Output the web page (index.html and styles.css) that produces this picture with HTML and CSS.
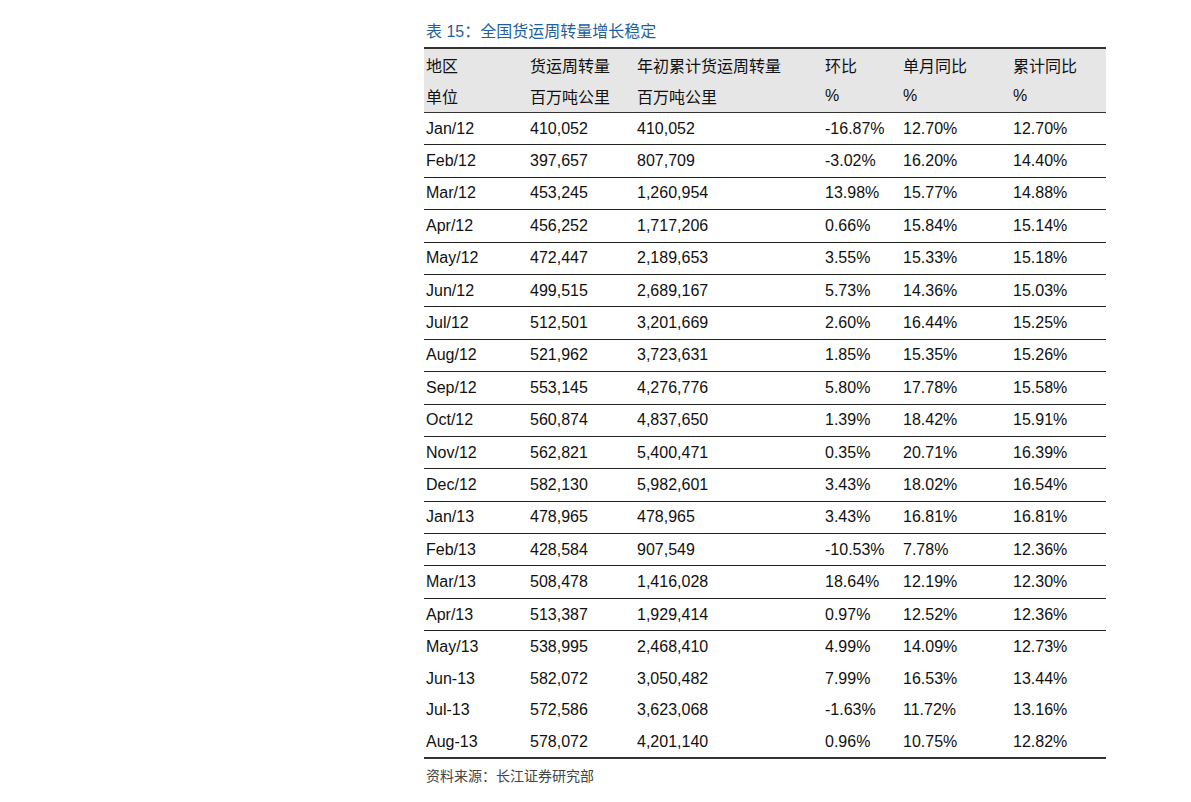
FILE: index.html
```html
<!DOCTYPE html>
<html lang="zh">
<head>
<meta charset="utf-8">
<link rel="stylesheet" href="styles.css">
</head>
<body>
<div class="page">
  <div class="title">表 15：全国货运周转量增长稳定</div>
  <table class="data">
    <colgroup>
      <col class="c1"><col class="c2"><col class="c3"><col class="c4"><col class="c5"><col class="c6">
    </colgroup>
    <thead>
      <tr><th>地区</th><th>货运周转量</th><th>年初累计货运周转量</th><th>环比</th><th>单月同比</th><th>累计同比</th></tr>
      <tr class="h2"><th>单位</th><th>百万吨公里</th><th>百万吨公里</th><th>%</th><th>%</th><th>%</th></tr>
    </thead>
    <tbody>
      <tr><td>Jan/12</td><td>410,052</td><td>410,052</td><td>-16.87%</td><td>12.70%</td><td>12.70%</td></tr>
      <tr><td>Feb/12</td><td>397,657</td><td>807,709</td><td>-3.02%</td><td>16.20%</td><td>14.40%</td></tr>
      <tr><td>Mar/12</td><td>453,245</td><td>1,260,954</td><td>13.98%</td><td>15.77%</td><td>14.88%</td></tr>
      <tr><td>Apr/12</td><td>456,252</td><td>1,717,206</td><td>0.66%</td><td>15.84%</td><td>15.14%</td></tr>
      <tr><td>May/12</td><td>472,447</td><td>2,189,653</td><td>3.55%</td><td>15.33%</td><td>15.18%</td></tr>
      <tr><td>Jun/12</td><td>499,515</td><td>2,689,167</td><td>5.73%</td><td>14.36%</td><td>15.03%</td></tr>
      <tr><td>Jul/12</td><td>512,501</td><td>3,201,669</td><td>2.60%</td><td>16.44%</td><td>15.25%</td></tr>
      <tr><td>Aug/12</td><td>521,962</td><td>3,723,631</td><td>1.85%</td><td>15.35%</td><td>15.26%</td></tr>
      <tr><td>Sep/12</td><td>553,145</td><td>4,276,776</td><td>5.80%</td><td>17.78%</td><td>15.58%</td></tr>
      <tr><td>Oct/12</td><td>560,874</td><td>4,837,650</td><td>1.39%</td><td>18.42%</td><td>15.91%</td></tr>
      <tr><td>Nov/12</td><td>562,821</td><td>5,400,471</td><td>0.35%</td><td>20.71%</td><td>16.39%</td></tr>
      <tr><td>Dec/12</td><td>582,130</td><td>5,982,601</td><td>3.43%</td><td>18.02%</td><td>16.54%</td></tr>
      <tr><td>Jan/13</td><td>478,965</td><td>478,965</td><td>3.43%</td><td>16.81%</td><td>16.81%</td></tr>
      <tr><td>Feb/13</td><td>428,584</td><td>907,549</td><td>-10.53%</td><td>7.78%</td><td>12.36%</td></tr>
      <tr><td>Mar/13</td><td>508,478</td><td>1,416,028</td><td>18.64%</td><td>12.19%</td><td>12.30%</td></tr>
      <tr><td>Apr/13</td><td>513,387</td><td>1,929,414</td><td>0.97%</td><td>12.52%</td><td>12.36%</td></tr>
      <tr class="nb"><td>May/13</td><td>538,995</td><td>2,468,410</td><td>4.99%</td><td>14.09%</td><td>12.73%</td></tr>
      <tr class="nb"><td>Jun-13</td><td>582,072</td><td>3,050,482</td><td>7.99%</td><td>16.53%</td><td>13.44%</td></tr>
      <tr class="nb"><td>Jul-13</td><td>572,586</td><td>3,623,068</td><td>-1.63%</td><td>11.72%</td><td>13.16%</td></tr>
      <tr class="last"><td>Aug-13</td><td>578,072</td><td>4,201,140</td><td>0.96%</td><td>10.75%</td><td>12.82%</td></tr>
    </tbody>
  </table>
  <div class="source">资料来源：长江证券研究部</div>
</div>
</body>
</html>
```
FILE: styles.css
```css
html, body {
  margin: 0;
  padding: 0;
  background: #ffffff;
}
body {
  font-family: "Liberation Sans", Arial, "Noto Sans CJK SC", sans-serif;
  color: #111111;
}
.page {
  margin-left: 424px;
  padding-top: 21px;
  width: 682px;
}
.title {
  font-size: 16px;
  line-height: 22px;
  color: #1f5f9c;
  padding-left: 2px;
  height: 26px;
}
.data {
  width: 682px;
  border-collapse: collapse;
  table-layout: fixed;
  font-size: 16px;
}
.c1 { width: 104px; }
.c2 { width: 107px; }
.c3 { width: 188px; }
.c4 { width: 78px; }
.c5 { width: 110px; }
.c6 { width: 95px; }
.data thead tr {
  background: #e6e6e6;
}
.data thead tr:first-child th {
  border-top: 2px solid #333333;
}
.data thead tr.h2 th {
  border-bottom: 1.5px solid #333333;
}
.data th {
  font-weight: normal;
  text-align: left;
  padding: 0 0 0 2px;
  height: 31.5px;
  font-size: 16px;
}
.data td {
  padding: 0 0 0 2px;
  height: 31.4px;
  border-bottom: 1px solid #222222;
  white-space: nowrap;
}
.data tr.nb td {
  border-bottom: none;
  height: 31.7px;
}
.data tr.last td {
  border-bottom: 2px solid #333333;
  height: 30.5px;
}
.source {
  font-size: 14px;
  color: #444444;
  padding: 6px 0 0 2px;
}
```
